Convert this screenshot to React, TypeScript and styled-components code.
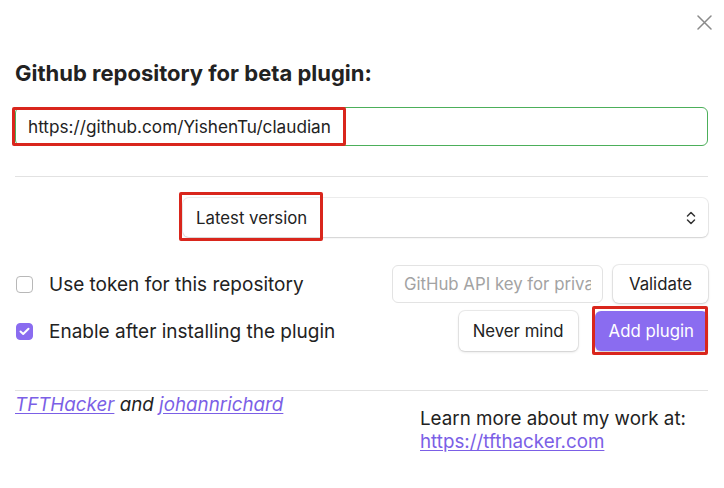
import React from 'react'
import styled, { createGlobalStyle } from 'styled-components'

const Global = createGlobalStyle`
    html, body {
        margin: 0;
        padding: 0;
        background: #ffffff;
    }
    body {
        font-family: Inter, "Noto Sans", "Liberation Sans", sans-serif;
        color: #222222;
    }
`

const Modal = styled.div`
    position: relative;
    box-sizing: border-box;
    width: 724px;
    height: 488px;
    padding: 60px 16px 0 15px;
    background: #ffffff;
    display: flex;
    flex-direction: column;
`

const CloseButton = styled.button`
    position: absolute;
    top: 10px;
    right: 8px;
    width: 24px;
    height: 24px;
    padding: 0;
    border: none;
    background: transparent;
    display: flex;
    align-items: center;
    justify-content: center;
    color: #8a8a8a;
`

const Title = styled.h2`
    margin: 0;
    font-size: 22px;
    line-height: 26px;
    font-weight: 700;
    color: #222222;
`

const Marked = styled.div<{ $top?: number }>`
    position: relative;
    margin-top: ${p => p.$top ?? 0}px;
`

const RedBox = styled.div<{ $left: number; $top: number; $width: number; $height: number }>`
    position: absolute;
    left: ${p => p.$left}px;
    top: ${p => p.$top}px;
    width: ${p => p.$width}px;
    height: ${p => p.$height}px;
    box-sizing: border-box;
    border: 3px solid #d9261c;
    border-radius: 2px;
    pointer-events: none;
`

const RepoInput = styled.div`
    box-sizing: border-box;
    height: 39px;
    padding: 0 12px;
    border: 1px solid #4caf5a;
    border-radius: 6px;
    display: flex;
    align-items: center;
    font-size: 17.2px;
    color: #222222;
`

const Divider = styled.div<{ $top: number }>`
    margin-top: ${p => p.$top}px;
    height: 1px;
    background: #e2e2e2;
`

const SelectRow = styled.div`
    margin-top: 21px;
    display: flex;
    justify-content: flex-end;
`

const Select = styled.div`
    box-sizing: border-box;
    width: 525px;
    height: 39px;
    padding: 0 12px 0 13px;
    border-radius: 6px;
    box-shadow: 0 0 0 1px rgba(0, 0, 0, 0.07), 0 1px 2px rgba(0, 0, 0, 0.12);
    display: flex;
    align-items: center;
    justify-content: space-between;
    font-size: 16.8px;
    color: #222222;
`

const OptionRow = styled.div<{ $top: number }>`
    margin-top: ${p => p.$top}px;
    display: flex;
    align-items: center;
    justify-content: space-between;
`

const CheckLabel = styled.label`
    display: flex;
    align-items: center;
    gap: 16px;
    font-size: 19px;
    color: #222222;
`

const Box = styled.span<{ $checked?: boolean }>`
    box-sizing: border-box;
    width: 17px;
    height: 17px;
    border-radius: 4px;
    border: 1px solid ${p => (p.$checked ? '#8a6cf0' : '#b8b8b8')};
    background: ${p => (p.$checked ? '#8a6cf0' : '#ffffff')};
    display: flex;
    align-items: center;
    justify-content: center;
    margin-left: 1px;
`

const Controls = styled.div<{ $gap: number }>`
    display: flex;
    gap: ${p => p.$gap}px;
    align-items: center;
`

const KeyInput = styled.input`
    box-sizing: border-box;
    width: 211px;
    height: 38px;
    padding: 0 11px;
    border: 1px solid #e3e3e3;
    border-radius: 6px;
    font-family: inherit;
    font-size: 16.8px;
    color: #222222;
    outline: none;

    &::placeholder {
        color: #a3a3a3;
    }
`

const Button = styled.button<{ $primary?: boolean; $height?: number; $pad?: number }>`
    box-sizing: border-box;
    height: ${p => p.$height ?? 40}px;
    padding: 0 ${p => p.$pad ?? 14}px;
    border: none;
    border-radius: 6px;
    font-family: inherit;
    font-size: 16.8px;
    color: ${p => (p.$primary ? '#ffffff' : '#222222')};
    background: ${p => (p.$primary ? '#8a6cf0' : '#ffffff')};
    box-shadow: ${p =>
        p.$primary
            ? '0 1px 2px rgba(0, 0, 0, 0.2)'
            : '0 0 0 1px rgba(0, 0, 0, 0.07), 0 1px 3px rgba(0, 0, 0, 0.14)'};
`

const Footer = styled.div`
    display: grid;
    grid-template-columns: 1fr 288px;
    font-size: 18.8px;
    line-height: 23px;
`

const Credits = styled.div`
    margin-top: 2px;
    font-style: italic;
`

const Link = styled.a`
    color: #7b5fe6;
    text-decoration: underline;
    text-underline-offset: 2px;
`

const About = styled.div`
    margin-top: 16px;
`

export default function App(): JSX.Element {
    return (
        <>
            <Global />
            <Modal>
                <CloseButton aria-label="Close">
                    <svg width="15" height="15" viewBox="0 0 15 15">
                        <path d="M1 1 L14 14 M14 1 L1 14" stroke="currentColor" strokeWidth="1.5" strokeLinecap="round" />
                    </svg>
                </CloseButton>
                <Title>Github repository for beta plugin:</Title>
                <Marked $top={21}>
                    <RepoInput>https://github.com/YishenTu/claudian</RepoInput>
                    <RedBox $left={-3} $top={0} $width={334} $height={39} />
                </Marked>
                <Divider $top={30} />
                <SelectRow>
                    <Marked>
                        <Select>
                            <span>Latest version</span>
                            <svg width="10" height="14" viewBox="0 0 10 14">
                                <path d="M1.5 5 L5 1.5 L8.5 5 M1.5 9 L5 12.5 L8.5 9" fill="none" stroke="#333" strokeWidth="1.5" strokeLinecap="round" strokeLinejoin="round" />
                            </svg>
                        </Select>
                        <RedBox $left={-4} $top={-6} $width={144} $height={49} />
                    </Marked>
                </SelectRow>
                <OptionRow $top={28}>
                    <CheckLabel>
                        <Box />
                        Use token for this repository
                    </CheckLabel>
                    <Controls $gap={10}>
                        <KeyInput placeholder="GitHub API key for private repositories" />
                        <Button $height={38} $pad={16}>Validate</Button>
                    </Controls>
                </OptionRow>
                <OptionRow $top={8}>
                    <CheckLabel>
                        <Box $checked>
                            <svg width="11" height="9" viewBox="0 0 11 9">
                                <path d="M1.5 4.5 L4.2 7 L9.5 1.8" fill="none" stroke="#fff" strokeWidth="2" strokeLinecap="round" strokeLinejoin="round" />
                            </svg>
                        </Box>
                        Enable after installing the plugin
                    </CheckLabel>
                    <Controls $gap={17}>
                        <Button>Never mind</Button>
                        <Marked>
                            <Button $primary>Add plugin</Button>
                            <RedBox $left={-3} $top={-5} $width={116} $height={49} />
                        </Marked>
                    </Controls>
                </OptionRow>
                <Divider $top={39} />
                <Footer>
                    <Credits>
                        <Link href="#">TFTHacker</Link> and <Link href="#">johannrichard</Link>
                    </Credits>
                    <About>
                        Learn more about my work at:
                        <br />
                        <Link href="#">https://tfthacker.com</Link>
                    </About>
                </Footer>
            </Modal>
        </>
    )
}
